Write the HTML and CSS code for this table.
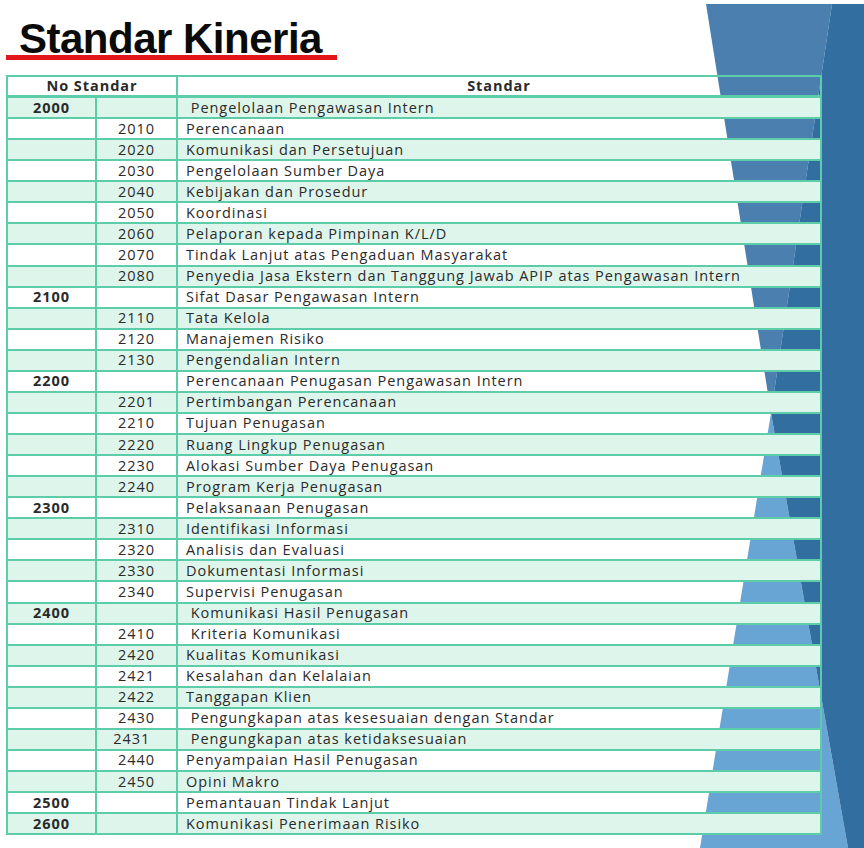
FILE: index.html
```html
<!DOCTYPE html>
<html lang="id">
<head>
<meta charset="utf-8">
<title>Standar Kineria</title>
<link rel="stylesheet" href="styles.css">
</head>
<body>
<div class="slide">
  <svg class="backdrop" width="864" height="848" viewBox="0 0 864 848" aria-hidden="true">
    <polygon class="shape-mid" points="706,4 832,4 771,413"/>
    <polygon class="shape-light" points="771,413 700,848 848,848"/>
    <polygon class="shape-dark" points="832,4 864,4 864,848 848,848 771,413"/>
  </svg>
  <div class="content">
    <h1 class="title">Standar Kineria</h1>
    <table class="standards">
      <colgroup>
        <col class="c1"><col class="c2"><col class="c3">
      </colgroup>
      <thead>
        <tr><th colspan="2">No Standar</th><th>Standar</th></tr>
      </thead>
      <tbody>
        <tr><td class="main">2000</td><td></td><td>&nbsp;Pengelolaan Pengawasan Intern</td></tr>
        <tr><td></td><td class="sub">2010</td><td>Perencanaan</td></tr>
        <tr><td></td><td class="sub">2020</td><td>Komunikasi dan Persetujuan</td></tr>
        <tr><td></td><td class="sub">2030</td><td>Pengelolaan Sumber Daya</td></tr>
        <tr><td></td><td class="sub">2040</td><td>Kebijakan dan Prosedur</td></tr>
        <tr><td></td><td class="sub">2050</td><td>Koordinasi</td></tr>
        <tr><td></td><td class="sub">2060</td><td>Pelaporan kepada Pimpinan K/L/D</td></tr>
        <tr><td></td><td class="sub">2070</td><td>Tindak Lanjut atas Pengaduan Masyarakat</td></tr>
        <tr><td></td><td class="sub">2080</td><td>Penyedia Jasa Ekstern dan Tanggung Jawab APIP atas Pengawasan Intern</td></tr>
        <tr><td class="main">2100</td><td></td><td>Sifat Dasar Pengawasan Intern</td></tr>
        <tr><td></td><td class="sub">2110</td><td>Tata Kelola</td></tr>
        <tr><td></td><td class="sub">2120</td><td>Manajemen Risiko</td></tr>
        <tr><td></td><td class="sub">2130</td><td>Pengendalian Intern</td></tr>
        <tr><td class="main">2200</td><td></td><td>Perencanaan Penugasan Pengawasan Intern</td></tr>
        <tr><td></td><td class="sub">2201</td><td>Pertimbangan Perencanaan</td></tr>
        <tr><td></td><td class="sub">2210</td><td>Tujuan Penugasan</td></tr>
        <tr><td></td><td class="sub">2220</td><td>Ruang Lingkup Penugasan</td></tr>
        <tr><td></td><td class="sub">2230</td><td>Alokasi Sumber Daya Penugasan</td></tr>
        <tr><td></td><td class="sub">2240</td><td>Program Kerja Penugasan</td></tr>
        <tr><td class="main">2300</td><td></td><td>Pelaksanaan Penugasan</td></tr>
        <tr><td></td><td class="sub">2310</td><td>Identifikasi Informasi</td></tr>
        <tr><td></td><td class="sub">2320</td><td>Analisis dan Evaluasi</td></tr>
        <tr><td></td><td class="sub">2330</td><td>Dokumentasi Informasi</td></tr>
        <tr><td></td><td class="sub">2340</td><td>Supervisi Penugasan</td></tr>
        <tr><td class="main">2400</td><td></td><td>&nbsp;Komunikasi Hasil Penugasan</td></tr>
        <tr><td></td><td class="sub">2410</td><td>&nbsp;Kriteria Komunikasi</td></tr>
        <tr><td></td><td class="sub">2420</td><td>Kualitas Komunikasi</td></tr>
        <tr><td></td><td class="sub">2421</td><td>Kesalahan dan Kelalaian</td></tr>
        <tr><td></td><td class="sub">2422</td><td>Tanggapan Klien</td></tr>
        <tr><td></td><td class="sub">2430</td><td>&nbsp;Pengungkapan atas kesesuaian dengan Standar</td></tr>
        <tr><td></td><td class="sub">2431&nbsp;&nbsp;</td><td>&nbsp;Pengungkapan atas ketidaksesuaian</td></tr>
        <tr><td></td><td class="sub">2440</td><td>Penyampaian Hasil Penugasan</td></tr>
        <tr><td></td><td class="sub">2450</td><td>Opini Makro</td></tr>
        <tr><td class="main">2500</td><td></td><td>Pemantauan Tindak Lanjut</td></tr>
        <tr><td class="main">2600</td><td></td><td>Komunikasi Penerimaan Risiko</td></tr>
      </tbody>
    </table>
  </div>
</div>
</body>
</html>
```

FILE: styles.css
```css
html, body {
  margin: 0;
  padding: 0;
  background: #ffffff;
}

.slide {
  position: relative;
  width: 864px;
  height: 848px;
  overflow: hidden;
  background: #ffffff;
}

.backdrop {
  position: absolute;
  left: 0;
  top: 0;
  z-index: 0;
}

.shape-mid { fill: #4a7fb0; }
.shape-light { fill: #68a4d4; }
.shape-dark { fill: #326ea0; }

.content {
  position: relative;
  z-index: 1;
  display: flex;
  flex-direction: column;
  align-items: flex-start;
  padding-left: 6px;
}

.title {
  margin: 22px 0 0 0;
  padding: 0 15px 0 13px;
  font-family: "Liberation Sans", Arial, sans-serif;
  font-weight: 700;
  font-size: 42px;
  line-height: 33px;
  letter-spacing: -0.5px;
  color: #0a0a0a;
  border-bottom: 5px solid #e3161b;
}

.standards {
  margin-top: 15px;
  width: 816px;
  table-layout: fixed;
  border-collapse: collapse;
  font-family: "Open Sans", "DejaVu Sans", sans-serif;
  font-size: 14.5px;
  letter-spacing: 0.95px;
  color: #2a2a2a;
  border: 2px solid #5ccca9;
}

.c1 { width: 89px; }
.c2 { width: 81px; }
.c3 { width: auto; }

.standards th,
.standards td {
  border: 2px solid #5ccca9;
  padding: 0;
  height: 19.07px;
  line-height: 18px;
  white-space: nowrap;
  vertical-align: middle;
}

.standards th {
  font-weight: 700;
  text-align: center;
  height: 17px;
  border-bottom-width: 3px;
}

.standards td { text-align: left; padding-left: 8px; }
.standards td.main { font-weight: 700; text-align: center; padding-left: 0; }
.standards td.sub { text-align: center; padding-left: 0; }

.standards tbody tr:nth-child(odd) td { background: #def5ec; }
```
